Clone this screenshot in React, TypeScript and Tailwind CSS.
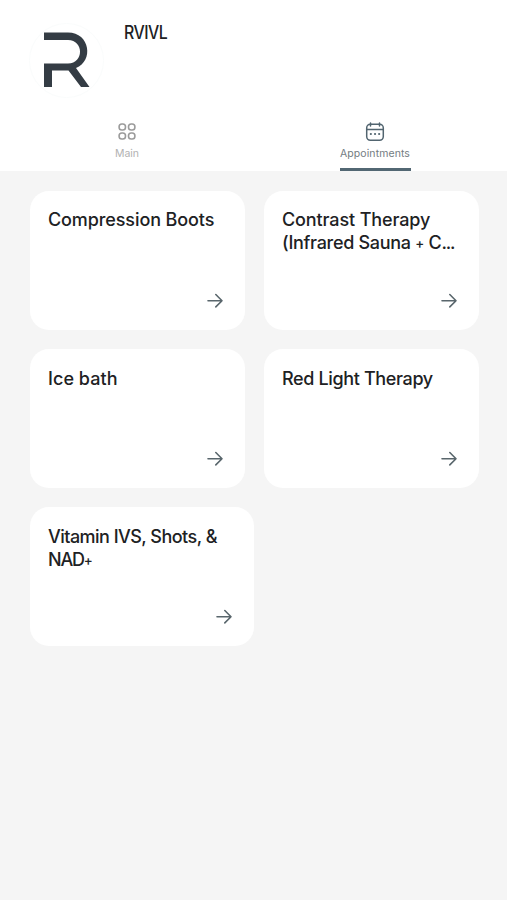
import clsx from "clsx";

const services = [
	{ lines: ["Compression Boots"], tracking: ["tracking-[-0.1px]"] },
	{
		lines: ["Contrast Therapy", "(Infrared Sauna + C..."],
		tracking: ["tracking-[-0.12px]", "tracking-[-0.3px]"],
	},
	{ lines: ["Ice bath"], tracking: ["tracking-[0.05px]"] },
	{ lines: ["Red Light Therapy"], tracking: ["tracking-[-0.36px]"] },
	{
		lines: ["Vitamin IVS, Shots, &", "NAD+"],
		tracking: ["tracking-[-0.53px]", "tracking-[-1.2px]"],
		wide: true,
	},
];

export default function App() {
	return (
		<div className="min-h-screen bg-[#f5f5f5] font-['Inter',sans-serif] text-[#202123]">
			<header className="flex h-[171px] flex-col bg-white">
				<div className="flex h-[116px] pt-[23px] pl-[29px]">
					<Logo />
					<h1 className="ml-5 origin-left scale-x-[0.88] text-[18px] leading-5 font-medium tracking-[-0.6px]">
						RVIVL
					</h1>
				</div>
				<nav className="flex flex-1 justify-between pr-[96.5px] pl-[91px]">
					<button className="flex w-[72px] flex-col items-center pt-[7px] text-[#9b9b9b]">
						<GridIcon />
						<span className="mt-1 text-[10.5px] leading-[15px] text-[#b2b2b2]">
							Main
						</span>
					</button>
					<button className="flex h-[56px] w-[71px] flex-col items-center border-b-[3px] border-[#526773] pt-[7px] text-[#526570]">
						<CalendarIcon />
						<span className="mt-1 text-[10.5px] leading-[15px] tracking-[0.08px] text-[#737c82]">
							Appointments
						</span>
					</button>
				</nav>
			</header>

			<main className="grid grid-cols-[215px_215px] gap-x-[19px] gap-y-[19.5px] px-[29.5px] pt-5">
				{services.map((service) => (
					<Card key={service.lines[0]} {...service} />
				))}
			</main>
		</div>
	);
}

type CardProps = {
	lines: string[];
	tracking: string[];
	wide?: boolean;
};

function Card({ lines, tracking, wide }: CardProps) {
	return (
		<article
			className={clsx(
				"flex h-[138.7px] flex-col justify-between rounded-[19px] bg-white pt-[17.4px] pr-[21px] pb-[20px] pl-[18.5px]",
				wide ? "w-[224px]" : "w-[215px]",
			)}
		>
			<h2 className="text-[18px] leading-[23px] font-medium whitespace-nowrap">
				{lines.map((line, i) => (
					<span key={line} className={clsx("block h-[23px]", tracking[i])}>
						<Title text={line} />
					</span>
				))}
			</h2>
			<ArrowIcon />
		</article>
	);
}

// plus signs and the trailing dots are set smaller than the letters
function Title({ text }: { text: string }) {
	return text.split(/(\+|\.\.\.)/).map((part, i) => {
		if (part === "+") {
			return (
				<span key={i} className="align-[1px] text-[13.5px] leading-none">
					{part}
				</span>
			);
		}
		if (part === "...") {
			return (
				<span key={i} className="tracking-[-1.1px]">
					{part}
				</span>
			);
		}
		return part;
	});
}

function ArrowIcon() {
	return (
		<svg
			className="self-end text-[#59666c]"
			width="18"
			height="18"
			viewBox="0 0 18 18"
			fill="none"
			stroke="currentColor"
			strokeWidth="1.6"
			strokeLinecap="round"
			strokeLinejoin="round"
		>
			<path d="M2 8.7H16M9.8 2.5L16 8.7L9.8 14.9" />
		</svg>
	);
}

function Logo() {
	return (
		<svg width="75" height="75" viewBox="0 0 75 75" fill="none">
			<circle cx="37.5" cy="37.5" r="37" stroke="#fafcfc" />
			<path
				d="M15 9.5H39C61 9.5 65 38 47 45L60.5 64H52L39.5 47.5H23V64H15V40.5H39C55 40.5 55 17 39 17H15Z"
				fill="#343c44"
			/>
		</svg>
	);
}

function GridIcon() {
	return (
		<svg
			width="20"
			height="20"
			viewBox="0 0 20 20"
			fill="none"
			stroke="currentColor"
			strokeWidth="1.6"
		>
			<rect x="2.1" y="2" width="6.4" height="6" rx="2.7" />
			<rect x="11.5" y="2" width="6.4" height="6" rx="2.7" />
			<rect x="2.1" y="11" width="6.4" height="6" rx="2.7" />
			<rect x="11.5" y="11" width="6.4" height="6" rx="2.7" />
		</svg>
	);
}

function CalendarIcon() {
	return (
		<svg
			width="20"
			height="20"
			viewBox="0 0 20 20"
			fill="none"
			stroke="currentColor"
			strokeWidth="1.5"
			strokeLinecap="round"
		>
			<rect x="1.7" y="2.3" width="16.6" height="15.9" rx="3.6" />
			<path d="M5.5 1V4M14.5 1V4M1.7 7.4H18.3" />
			<path d="M5.8 12H5.9M10 12H10.1M14.1 12H14.2" strokeWidth="2.1" />
		</svg>
	);
}
